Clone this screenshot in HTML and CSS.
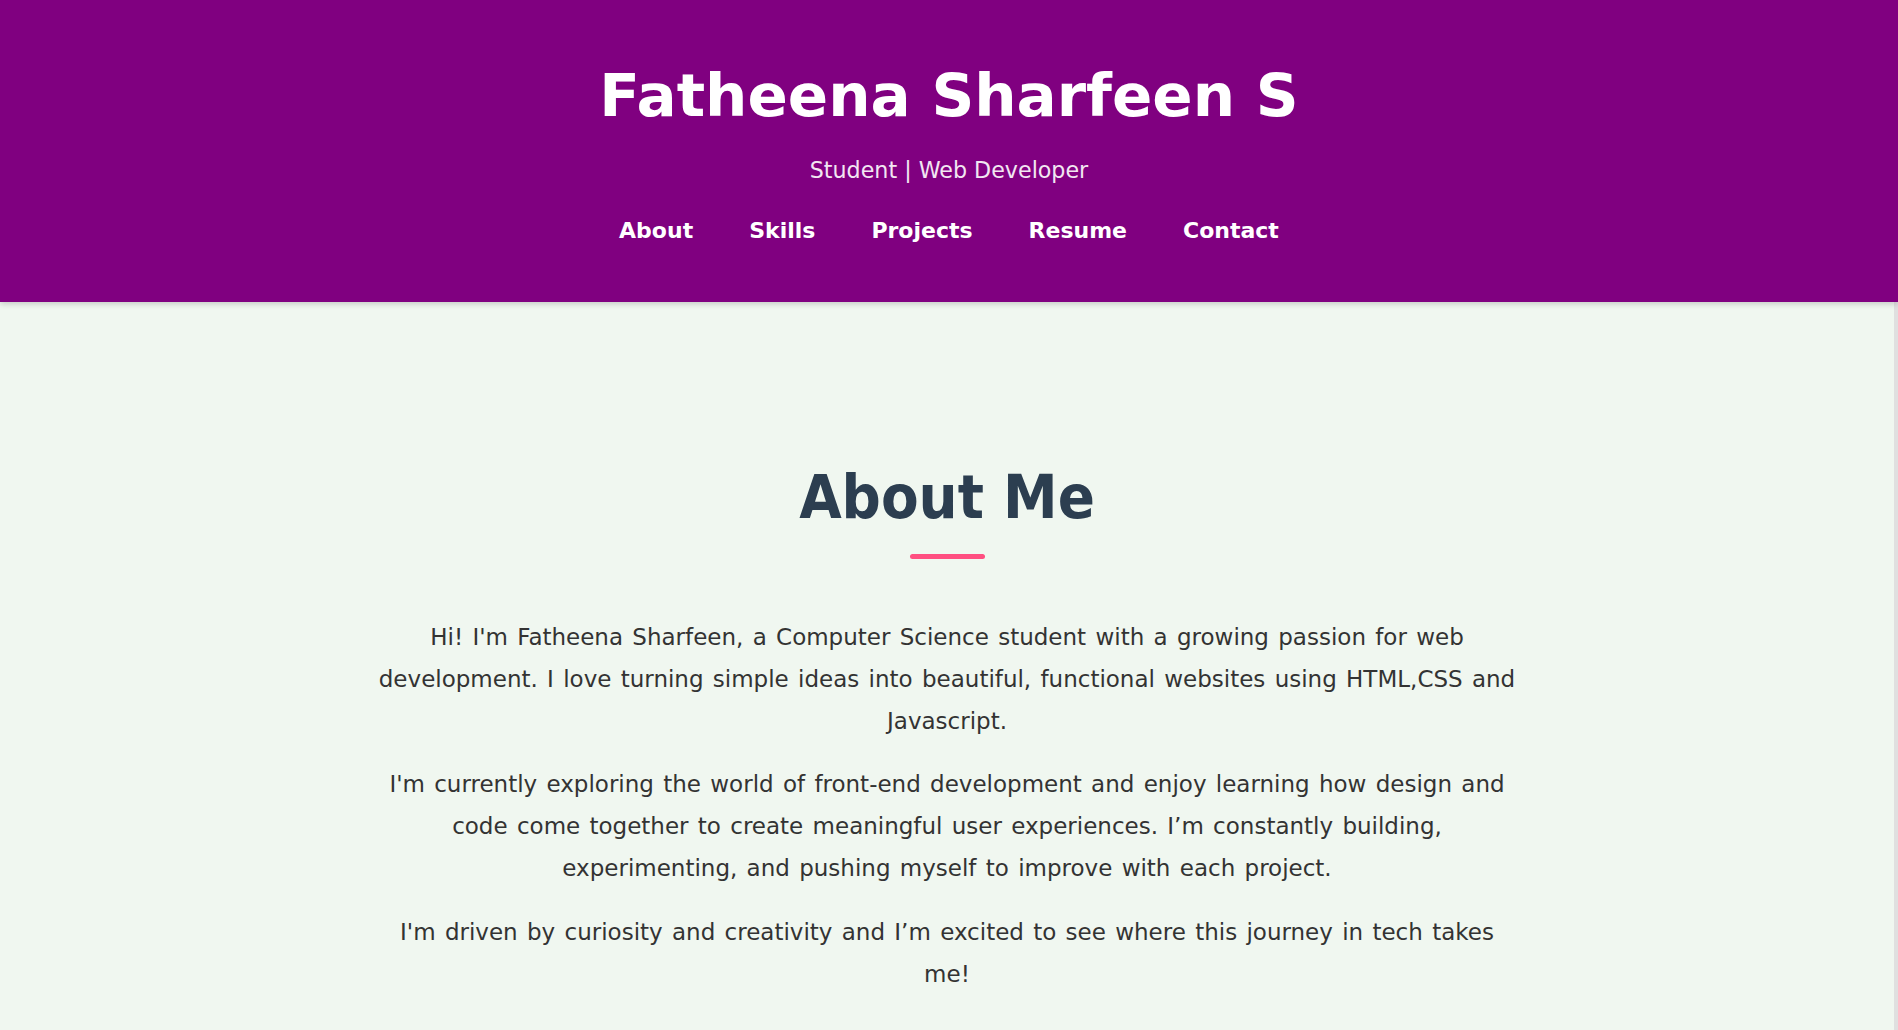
FILE: index.html
```html
<!DOCTYPE html>
<html lang="en">
<head>
<meta charset="utf-8">
<title>Fatheena Sharfeen S</title>
<link rel="stylesheet" href="styles.css">
</head>
<body>
<header class="site-header">
  <h1 class="site-title">Fatheena Sharfeen S</h1>
  <p class="site-tagline">Student | Web Developer</p>
  <nav class="site-nav">
    <a href="#about">About</a>
    <a href="#skills">Skills</a>
    <a href="#projects">Projects</a>
    <a href="#resume">Resume</a>
    <a href="#contact">Contact</a>
  </nav>
</header>
<main class="page-main">
  <section class="about" id="about">
    <h2 class="section-title">About Me</h2>
    <div class="about-text">
      <p>Hi! I'm Fatheena Sharfeen, a Computer Science student with a growing passion for web development. I love turning simple ideas into beautiful, functional websites using HTML,CSS and Javascript.</p>
      <p>I'm currently exploring the world of front-end development and enjoy learning how design and code come together to create meaningful user experiences. I’m constantly building, experimenting, and pushing myself to improve with each project.</p>
      <p>I'm driven by curiosity and creativity and I’m excited to see where this journey in tech takes me!</p>
    </div>
  </section>
</main>
</body>
</html>
```

FILE: styles.css
```css
* { box-sizing: border-box; }
html, body { margin: 0; padding: 0; }
body {
  background: #f0f7f0;
  color: #333333;
  font-family: "DejaVu Sans", Verdana, sans-serif;
  overflow: hidden;
}
.site-header {
  background: #800080;
  color: #ffffff;
  text-align: center;
  height: 302px;
  padding-top: 58px;
  box-shadow: 0 2px 6px rgba(0,0,0,0.18);
  position: relative;
  z-index: 1;
}
.site-title {
  margin: 0;
  font-size: 59.5px;
  line-height: 76px;
  font-weight: bold;
}
.site-tagline {
  margin: 22px 0 0;
  font-size: 22.2px;
  line-height: 28px;
  color: #f2e6f2;
}
.site-nav {
  display: flex;
  justify-content: center;
  gap: 56px;
  margin-top: 33px;
}
.site-nav a {
  color: #ffffff;
  text-decoration: none;
  font-weight: bold;
  font-size: 22px;
  line-height: 28px;
}
.page-main {
  border-right: 4px solid #e0e0e0;
  min-height: 740px;
}
.about {
  padding-top: 160px;
  text-align: center;
}
.section-title {
  margin: 0;
  font-family: "DejaVu Sans Condensed", "DejaVu Sans", sans-serif;
  font-stretch: condensed;
  font-size: 61px;
  line-height: 70px;
  color: #2c3e50;
  font-weight: bold;
}
.section-title::after {
  content: "";
  display: block;
  width: 75px;
  height: 5px;
  border-radius: 3px;
  background: #ff4f81;
  margin: 22px auto 0;
}
.about-text {
  max-width: 1140px;
  margin: 58px auto 0;
}
.about-text p {
  margin: 0 0 22px;
  font-size: 23px;
  line-height: 41.8px;
  word-spacing: 2px;
}
```
